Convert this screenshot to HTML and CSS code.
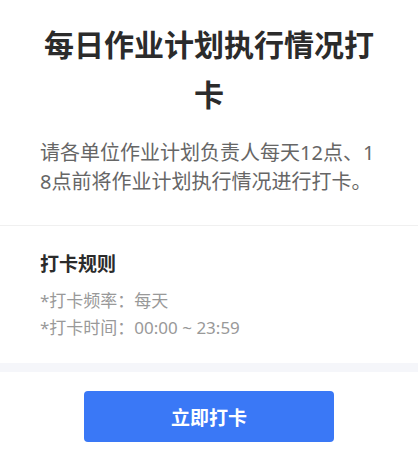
FILE: index.html
```html
<!DOCTYPE html>
<html lang="zh">
<head>
<meta charset="utf-8">
<title>每日作业计划执行情况打卡</title>
<link rel="stylesheet" href="styles.css">
</head>
<body>
<div class="page">
  <section class="intro">
    <h1 class="title">每日作业计划执行情况打卡</h1>
    <p class="desc">请各单位作业计划负责人每天12点、18点前将作业计划执行情况进行打卡。</p>
  </section>
  <section class="rules">
    <h2 class="rules-title">打卡规则</h2>
    <p class="rule">*打卡频率：每天</p>
    <p class="rule">*打卡时间：00:00 ~ 23:59</p>
  </section>
  <div class="band"></div>
  <div class="actions">
    <button class="btn" type="button">立即打卡</button>
  </div>
</div>
</body>
</html>
```
FILE: styles.css
```css
html, body {
  margin: 0;
  padding: 0;
  background: #ffffff;
}
body {
  font-family: "Noto Sans", "Noto Sans CJK SC", sans-serif;
  color: #333333;
}
.page {
  width: 418px;
}
.intro {
  padding: 20px 40px 29px;
  border-bottom: 1px solid #f0f0f0;
}
.title {
  margin: 0;
  font-size: 30px;
  line-height: 50px;
  font-weight: 700;
  color: #2b2b2b;
  text-align: center;
}
.desc {
  margin: 18px 0 0;
  font-size: 20px;
  line-height: 29px;
  color: #666666;
  word-break: break-all;
}
.rules {
  padding: 25px 40px 22px;
}
.rules-title {
  margin: 0 0 10px;
  font-size: 19px;
  line-height: 26px;
  font-weight: 700;
  color: #2b2b2b;
}
.rule {
  margin: 0;
  font-size: 17px;
  line-height: 27px;
  color: #999999;
}
.band {
  height: 9px;
  background: #f5f6fa;
}
.actions {
  display: flex;
  justify-content: center;
  padding-top: 19px;
}
.btn {
  width: 250px;
  height: 51px;
  border: none;
  border-radius: 4px;
  background: #3a78f6;
  color: #ffffff;
  font-family: "Noto Sans", "Noto Sans CJK SC", sans-serif;
  font-size: 19px;
  font-weight: 700;
  cursor: pointer;
}
```
